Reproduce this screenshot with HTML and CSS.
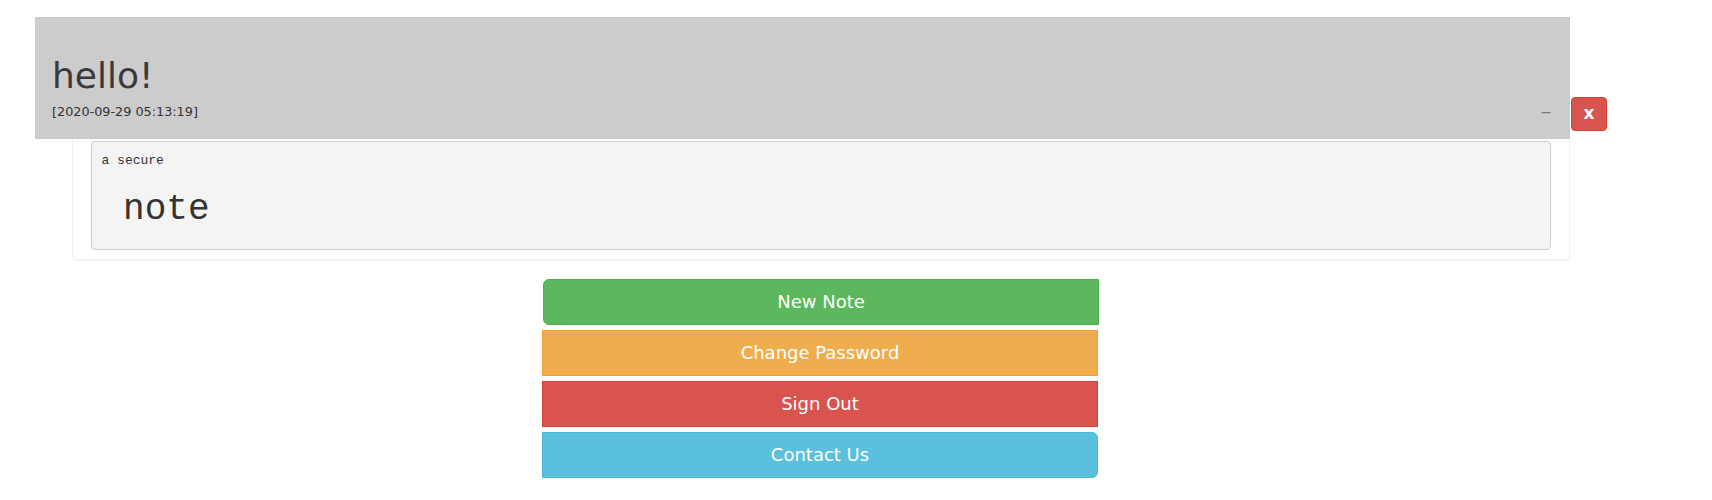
FILE: index.html
```html
<!DOCTYPE html>
<html lang="en">
<head>
<meta charset="utf-8">
<title>Notes</title>
<link rel="stylesheet" href="styles.css">
</head>
<body>
<div class="note">
  <div class="note-header">
    <div class="note-head">
      <h1 class="note-title">hello!</h1>
      <div class="note-meta">
        <span class="note-date">[2020-09-29 05:13:19]</span>
        <span class="note-min">−</span>
      </div>
    </div>
    <button class="btn-close" type="button">x</button>
  </div>
  <div class="note-panel">
    <pre class="note-body">a secure<h1 class="note-big"> note</h1></pre>
  </div>
</div>
<div class="actions">
  <button class="act act-green" type="button">New Note</button>
  <button class="act act-orange" type="button">Change Password</button>
  <button class="act act-red" type="button">Sign Out</button>
  <button class="act act-blue" type="button">Contact Us</button>
</div>
</body>
</html>
```

FILE: styles.css
```css
html, body {
  margin: 0;
  padding: 0;
  background: #fff;
}
body {
  font-family: "DejaVu Sans", Verdana, sans-serif;
  font-size: 14px;
  line-height: 1.42857;
  color: #333;
}
.note {
  margin: 17px 0 0 35px;
}
.note-header {
  display: flex;
  align-items: flex-end;
}
.note-head {
  width: 1535px;
  background: #cccccc;
  padding: 0 0 8px 17px;
  box-sizing: border-box;
}
.note-title {
  margin: 39px 0 0 0;
  font-size: 36px;
  font-weight: 500;
  line-height: 40px;
  color: #3a3a3a;
}
.note-meta {
  margin-top: 1px;
  height: 34px;
  box-sizing: border-box;
  padding: 0 18px 3px 0;
  display: flex;
  align-items: center;
  justify-content: space-between;
}
.note-date {
  font-size: 12.8px;
  color: #333;
}
.note-min {
  font-size: 14px;
  color: #777;
}
.btn-close {
  width: 36px;
  height: 34px;
  margin: 0 0 8px 1px;
  padding: 0 0 2px 0;
  background: #d9534f;
  border: 1px solid #d43f3a;
  border-radius: 4px;
  color: #fff;
  font-family: "DejaVu Sans", Verdana, sans-serif;
  font-weight: bold;
  font-size: 17px;
  line-height: 20px;
}
.note-panel {
  margin-left: 37px;
  width: 1498px;
  box-sizing: border-box;
  border: 1px solid #f2f2f2;
  border-top: 0;
  border-radius: 0 0 4px 4px;
  box-shadow: 0 1px 1px rgba(0, 0, 0, 0.04);
  padding: 2px 18px 9px 18px;
  background: #fff;
}
.note-body {
  margin: 0;
  padding: 9.5px;
  font-family: "Liberation Mono", "Courier New", monospace;
  font-size: 13px;
  line-height: 1.42857;
  color: #333;
  background: #f4f4f4;
  border: 1px solid #ccc;
  border-radius: 4px;
  white-space: pre;
}
.note-big {
  margin: 20px 0 10px 0;
  font-family: inherit;
  font-size: 36px;
  font-weight: 500;
  line-height: 1.1;
}
.actions {
  margin: 19px 0 0 543px;
  width: 556px;
  display: flex;
  flex-direction: column;
  gap: 5px;
}
.act {
  display: block;
  width: 556px;
  height: 46px;
  margin: 0 0 0 -1px;
  padding: 0 16px;
  border: 1px solid;
  border-radius: 0;
  color: #fff;
  font-family: "DejaVu Sans", Verdana, sans-serif;
  font-size: 18px;
  line-height: 24px;
  text-align: center;
}
.act-green {
  margin-left: 0;
  background: #5cb85c;
  border-color: #4cae4c;
  border-radius: 6px 0 0 6px;
}
.act-orange {
  background: #f0ad4e;
  border-color: #eea236;
}
.act-red {
  background: #d9534f;
  border-color: #d43f3a;
}
.act-blue {
  background: #5bc0de;
  border-color: #46b8da;
  border-radius: 0 6px 6px 0;
}
```
